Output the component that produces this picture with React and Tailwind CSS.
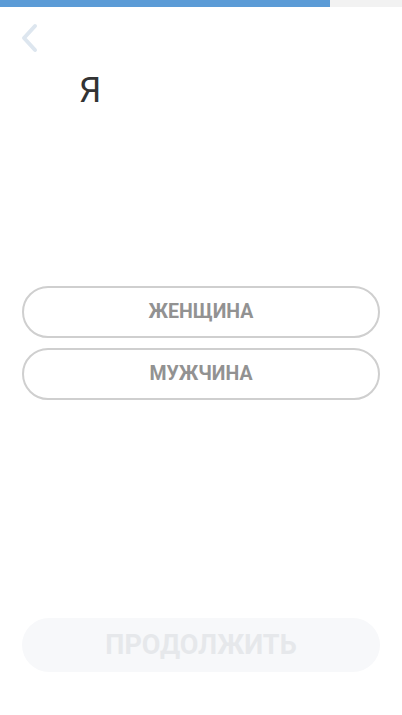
import React from 'react';

// Экран выбора пола
const options = ['ЖЕНЩИНА', 'МУЖЧИНА'];

export default function App() {
  return (
    <div className="relative flex h-[715px] w-[402px] flex-col overflow-hidden bg-white font-['Roboto',sans-serif]">
      {/* Прогресс */}
      <div className="flex h-[7px] w-full bg-[#f2f2f2]">
        <div className="h-full w-[330px] bg-[#5b9bd6]" />
      </div>

      {/* Назад */}
      <div className="pl-[18px] pt-[15px]">
        <svg width="24" height="32" viewBox="0 0 24 32" fill="none">
          <path d="M17 4 L6 16 L17 28" stroke="#dde6ef" strokeWidth="4" strokeLinecap="round" strokeLinejoin="round" />
        </svg>
      </div>

      <h1 className="pl-[79px] pt-[19px] text-[35px] leading-none font-normal text-[#333333]">Я</h1>

      <div className="mt-[178px] flex flex-col gap-[10px] px-[22px]">
        {options.map(o => (
          <button
            key={o}
            className="flex h-[52px] items-center justify-center rounded-full border-2 border-[#cfcfcf] text-[19.5px] font-bold text-[#929292]"
          >
            {o}
          </button>
        ))}
      </div>

      <div className="mt-auto px-[22px] pb-[43px]">
        <button className="flex h-[54px] w-full items-center justify-center rounded-full bg-[#f7f8fa] text-[27px] font-bold text-[#e6e8eb]">
          ПРОДОЛЖИТЬ
        </button>
      </div>
    </div>
  );
}
